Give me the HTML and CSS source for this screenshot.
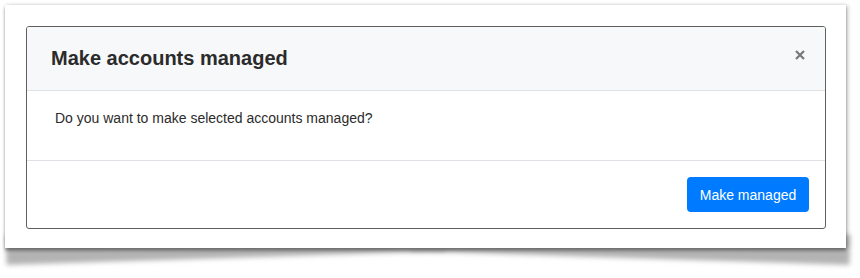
FILE: index.html
```html
<!DOCTYPE html>
<html lang="en">
<head>
    <meta charset="UTF-8">
    <title>Make accounts managed</title>
    <link rel="stylesheet" href="styles.css">
</head>
<body>
    <div class="shot">
        <div class="frame">
            <div class="modal">
                <div class="modal-header">
                    <h5 class="modal-title">Make accounts managed</h5>
                    <button class="close" aria-label="Close">
                        <svg width="10" height="10" viewBox="0 0 10 10">
                            <path d="M1 1 L9 9 M9 1 L1 9" stroke="currentColor" stroke-width="2.2"/>
                        </svg>
                    </button>
                </div>
                <div class="modal-body">
                    <p>Do you want to make selected accounts managed?</p>
                </div>
                <div class="modal-footer">
                    <button class="btn-primary">Make managed</button>
                </div>
            </div>
        </div>
    </div>
</body>
</html>
```

FILE: styles.css
```css
* {
    box-sizing: border-box;
    margin: 0;
    padding: 0;
}

html {
    background: #fff;
}

body {
    min-height: 278px;
    font-family: 'Liberation Sans', Arial, sans-serif;
    color: #212529;
    padding: 5px 0 0 5px;
}

/* screenshot frame with curled shadow */
.shot {
    position: relative;
    z-index: 0;
    width: 841px;
    height: 243px;
}

.shot::before,
.shot::after {
    content: '';
    position: absolute;
    z-index: 0;
    bottom: -10px;
    width: 440px;
    height: 30px;
    background: #b3b3b3;
    filter: blur(2.5px);
}

.shot::before {
    left: 1px;
    transform: rotate(-1.8deg);
}

.shot::after {
    right: -4px;
    transform: rotate(1.8deg);
}

.frame {
    position: relative;
    z-index: 1;
    height: 243px;
    background: #fff;
    padding: 21px 0 0 21px;
    box-shadow: 0 0 3px rgba(0, 0, 0, 0.15), 3px 0 4px rgba(0, 0, 0, 0.12), 0 3px 3px rgba(0, 0, 0, 0.3);
}

.modal {
    width: 800px;
    height: 203px;
    border: 1px solid #5f5f5f;
    border-radius: 3px;
    display: flex;
    flex-direction: column;
    overflow: hidden;
}

.modal-header {
    height: 64px;
    background: #f7f8fa;
    border-bottom: 1px solid #dee2e6;
    display: flex;
    align-items: center;
    justify-content: space-between;
    padding: 0 20px 0 24px;
}

.modal-title {
    font-size: 20px;
    font-weight: 700;
    color: #2b2b2b;
}

.close {
    background: none;
    border: none;
    color: #777;
    display: flex;
    margin-top: -8px;
}

.modal-body {
    height: 70px;
    border-bottom: 1px solid #dee2e6;
    padding: 17px 28px 0;
}

.modal-body p {
    font-size: 14px;
    line-height: 21px;
    color: #2b2b2b;
}

.modal-footer {
    flex: 1;
    display: flex;
    justify-content: flex-end;
    align-items: flex-start;
    padding: 16px 16px 0;
}

.btn-primary {
    width: 122px;
    height: 35px;
    background: #007bff;
    color: #fff;
    border: none;
    border-radius: 4px;
    font-family: 'Liberation Sans', Arial, sans-serif;
    font-size: 14px;
}
```
